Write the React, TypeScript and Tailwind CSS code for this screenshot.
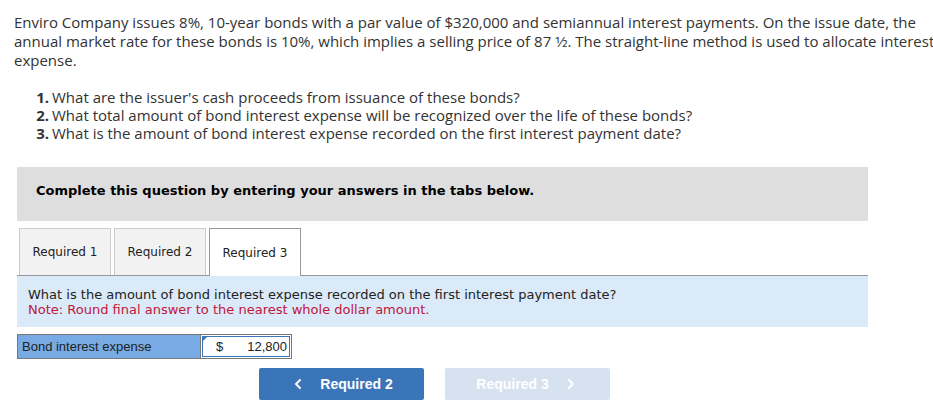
import { ChevronLeft, ChevronRight } from "lucide-react";

const questions = [
  "What are the issuer's cash proceeds from issuance of these bonds?",
  "What total amount of bond interest expense will be recognized over the life of these bonds?",
  "What is the amount of bond interest expense recorded on the first interest payment date?",
];

const tabs = ["Required 1", "Required 2", "Required 3"];

export default function App() {
  return (
    <div className="w-[933px] h-[400px] overflow-hidden bg-white">
      {/* Problem statement */}
      <div className="pl-[14px] pt-[13px] text-[15px] leading-[19px] text-[#333] font-['Open_Sans',sans-serif] whitespace-nowrap">
        <div>
          Enviro Company issues 8%, 10-year bonds with a par value of $320,000 and semiannual interest payments. On the issue date, the
        </div>
        <div>
          annual market rate for these bonds is 10%, which implies a selling price of 87 1⁄2. The straight-line method is used to allocate interest
        </div>
        <div>expense.</div>
      </div>

      <ol className="mt-[18px] text-[15px] leading-[18px] text-[#333] font-['Open_Sans',sans-serif]">
        {questions.map((q, i) => (
          <li key={i} className="flex h-[18px] items-center whitespace-nowrap">
            <span className="w-[52px] text-right font-bold pr-[3px]">{i + 1}.</span>
            <span>{q}</span>
          </li>
        ))}
      </ol>

      {/* Instructions */}
      <div className="mt-[25px] ml-[17px] w-[851px] h-[54px] bg-[#dedede] pl-[19px] pt-[10px]">
        <span className="font-['DejaVu_Sans',sans-serif] font-bold text-[13px] text-black">
          Complete this question by entering your answers in the tabs below.
        </span>
      </div>

      {/* Tabs */}
      <div className="ml-[17px] w-[851px] mt-[7px] flex items-end gap-[3px] pl-[2px] border-b border-[#999] h-[48px]">
        {tabs.map((t, i) =>
          i === 2 ? (
            <div
              key={t}
              className="w-[92px] h-[48px] -mb-px bg-white border border-b-0 border-[#999] flex items-center justify-center font-['DejaVu_Sans',sans-serif] text-[12px] text-[#222]"
            >
              {t}
            </div>
          ) : (
            <div
              key={t}
              className="w-[92px] h-[47px] bg-[#f2f2f2] border border-b-0 border-[#ccc] flex items-center justify-center font-['DejaVu_Sans',sans-serif] text-[12px] text-[#222]"
            >
              {t}
            </div>
          )
        )}
      </div>

      {/* Question panel */}
      <div className="ml-[17px] w-[851px] h-[51px] bg-[#daeaf8] pl-[11px] pt-[11px] font-['DejaVu_Sans',sans-serif] text-[13px] leading-[15px]">
        <div className="text-[#222]">
          What is the amount of bond interest expense recorded on the first interest payment date?
        </div>
        <div className="text-[#c0163a]">Note: Round final answer to the nearest whole dollar amount.</div>
      </div>

      {/* Answer row */}
      <div className="ml-[17px] mt-[7px] flex h-[25px] font-['Liberation_Sans',sans-serif] text-[13px] text-[#222]">
        <div className="w-[184px] bg-[#78abe4] border border-[#777] flex items-center pl-[4px]">
          Bond interest expense
        </div>
        <div className="relative w-[91px] bg-white border border-l-0 border-[#777] p-[1px]">
          <div className="h-full border border-[#3a75b9] flex items-center pl-[13px] pr-[2px]">
            <span>$</span>
            <span className="ml-auto">12,800</span>
          </div>
          <span className="absolute left-[1px] top-[1px] w-0 h-0 border-t-[6px] border-t-[#3a75b9] border-r-[6px] border-r-transparent" />
        </div>
      </div>

      {/* Navigation */}
      <div className="mt-[9px] flex gap-[21px] pl-[259px] font-['Liberation_Sans',sans-serif] font-bold text-[14px] text-white">
        <button className="w-[165px] h-[32px] rounded-[2px] bg-[#3a75b9] flex items-center justify-center gap-[14px]">
          <ChevronLeft className="w-[16px] h-[16px]" strokeWidth={3} />
          <span>Required 2</span>
        </button>
        <button className="w-[165px] h-[32px] rounded-[2px] bg-[#d6e2f0] flex items-center justify-center gap-[14px]">
          <span>Required 3</span>
          <ChevronRight className="w-[16px] h-[16px]" strokeWidth={3} />
        </button>
      </div>
    </div>
  );
}
